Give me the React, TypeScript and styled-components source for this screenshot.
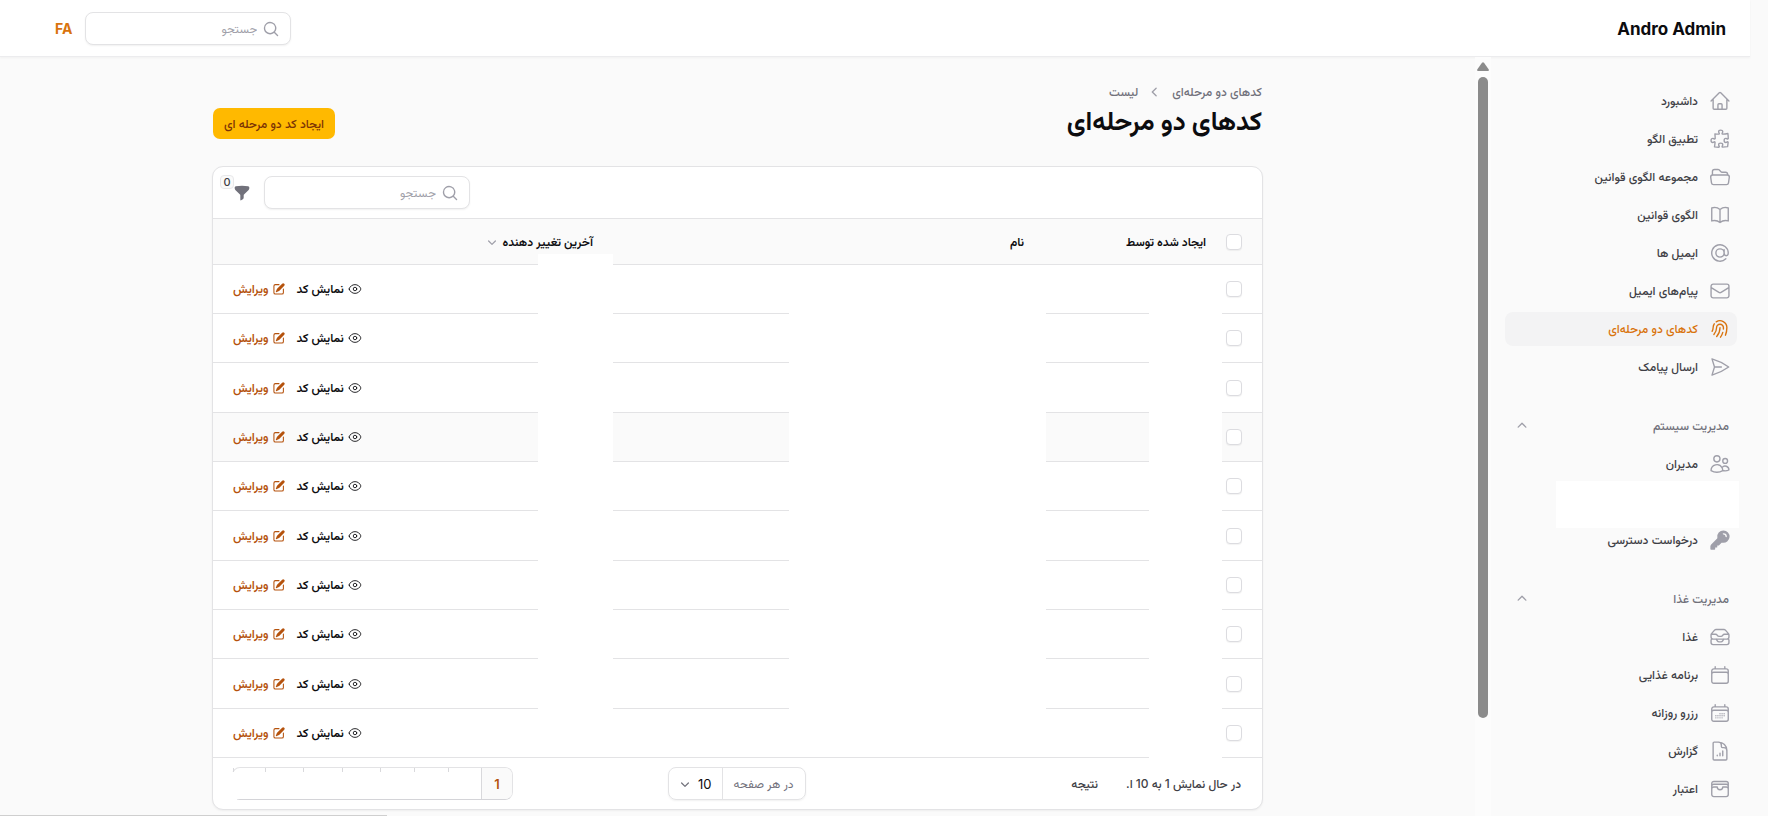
import React from "react";
import styled, { createGlobalStyle, css } from "styled-components";
import type { IconType } from "react-icons";
import {
  HiFunnel,
  HiKey,
  HiMiniChevronDown,
  HiMiniChevronLeft,
  HiMiniChevronUp,
  HiMiniMagnifyingGlass,
  HiMiniPencilSquare,
  HiOutlineAtSymbol,
  HiOutlineBookOpen,
  HiOutlineCalendar,
  HiOutlineCalendarDays,
  HiOutlineDocumentChartBar,
  HiOutlineEnvelope,
  HiOutlineEye,
  HiOutlineFingerPrint,
  HiOutlineFolderOpen,
  HiOutlineHome,
  HiOutlineInboxStack,
  HiOutlinePaperAirplane,
  HiOutlinePuzzlePiece,
  HiOutlineUsers,
  HiOutlineWallet,
} from "react-icons/hi2";

const color = {
  page: "#fafafa",
  surface: "#ffffff",
  line: "#e3e3e5",
  hover: "#f3f3f4",
  text: "#0c0c0f",
  body: "#3f3f46",
  muted: "#71717b",
  icon: "#9f9fa9",
  accent: "#d9730d",
  accentDark: "#b5520c",
  amber: "#ffb900",
  brown: "#7b3306",
  thumb: "#8b8b8b",
};

const GlobalStyle = createGlobalStyle`
  *, *::before, *::after { box-sizing: border-box; }
  body {
    margin: 0;
    background: ${color.page};
    color: ${color.text};
    font-family: Inter, Vazirmatn, "Noto Sans Arabic", "DejaVu Sans", sans-serif;
    font-size: 12px;
    line-height: 20px;
    overflow: hidden;
  }
  button, input, select { font: inherit; color: inherit; }
  a { color: inherit; text-decoration: none; }
  svg { flex: none; }
`;

const Page = styled.div`
  height: 100vh;
  padding-right: 18px;
  display: flex;
  flex-direction: column;
`;

const TopBar = styled.header`
  flex: none;
  height: 57px;
  padding: 1px 24px 0 55px;
  display: flex;
  align-items: center;
  justify-content: space-between;
  background: ${color.surface};
  border-bottom: 1px solid #ececee;
  box-shadow: 0 1px 2px rgba(0, 0, 0, 0.04);
`;

const Brand = styled.a`
  font-size: 17px;
  font-weight: 700;
  line-height: 28px;
`;

const TopTools = styled.div`
  display: flex;
  align-items: center;
  gap: 13px;
`;

const LocaleButton = styled.button`
  padding: 0;
  border: 0;
  background: none;
  color: ${color.accent};
  font-size: 14px;
  font-weight: 700;
  cursor: pointer;
`;

const SearchBox = styled.label`
  width: 206px;
  height: 33px;
  padding: 0 10px;
  display: flex;
  align-items: center;
  gap: 5px;
  background: ${color.surface};
  border: 1px solid ${color.line};
  border-radius: 8px;
  box-shadow: 0 1px 2px rgba(0, 0, 0, 0.06);
  color: ${color.icon};
`;

const SearchInput = styled.input`
  flex: 1;
  min-width: 0;
  padding: 0;
  border: 0;
  outline: 0;
  background: none;
  color: ${color.text};
  &::placeholder {
    color: ${color.icon};
    opacity: 1;
  }
`;

const Body = styled.div`
  flex: 1;
  min-height: 0;
  display: flex;
`;

const Sidebar = styled.nav`
  flex: none;
  width: 259px;
  padding: 27px 13px 0 14px;
  display: flex;
  flex-direction: column;
  gap: 25px;
  overflow: hidden;
`;

const NavGroup = styled.section`
  flex: none;
  display: flex;
  flex-direction: column;
  gap: 4px;
`;

const NavHeading = styled.button`
  height: 34px;
  padding: 0 8px;
  display: flex;
  align-items: center;
  justify-content: space-between;
  border: 0;
  background: none;
  color: ${color.muted};
  font-weight: 500;
  cursor: pointer;
  svg { color: ${color.icon}; }
`;

const NavList = styled.ul`
  margin: 0;
  padding: 0;
  list-style: none;
  display: flex;
  flex-direction: column;
  gap: 4px;
`;

const NavLink = styled.a<{ $active?: boolean }>`
  height: 34px;
  padding: 0 6px;
  display: flex;
  align-items: center;
  gap: 11px;
  border-radius: 8px;
  color: ${color.body};
  font-weight: 500;
  svg { color: ${color.icon}; }
  ${(p) =>
    p.$active &&
    css`
      background: ${color.hover};
      color: ${color.accent};
      svg { color: ${color.accent}; }
    `}
`;

const NavBlank = styled.li`
  height: 47px;
  width: 183px;
  margin: -4px -2px -9px 0;
  background: ${color.surface};
`;

const ScrollTrack = styled.div`
  flex: none;
  width: 16px;
  padding-top: 5px;
  display: flex;
  flex-direction: column;
  align-items: center;
  gap: 6px;
  background: #fcfcfc;
`;

const ScrollArrow = styled.svg`
  display: block;
  fill: ${color.thumb};
`;

const ScrollThumb = styled.div`
  width: 10px;
  height: 85%;
  border-radius: 5px;
  background: ${color.thumb};
`;

const Main = styled.main`
  flex: 1;
  min-width: 0;
  padding: 25px 32px 0;
`;

const Content = styled.div`
  max-width: 1051px;
  margin: 0 auto;
`;

const PageHead = styled.div`
  display: flex;
  align-items: center;
  justify-content: space-between;
  margin-bottom: 27px;
  padding: 0 1px;
`;

const Crumbs = styled.ol`
  margin: 0;
  padding: 0;
  list-style: none;
  display: flex;
  align-items: center;
  gap: 8px;
  color: ${color.muted};
  font-weight: 500;
`;

const Crumb = styled.li`
  display: flex;
  align-items: center;
  gap: 8px;
  svg { color: ${color.icon}; }
`;

const Title = styled.h1`
  margin: 1px 0 0;
  font-size: 26px;
  line-height: 36px;
  font-weight: 700;
`;

const CreateButton = styled.button`
  height: 31px;
  padding: 0 11px;
  margin-top: 26px;
  align-self: flex-start;
  border: 0;
  border-radius: 7px;
  background: ${color.amber};
  color: ${color.brown};
  font-weight: 500;
  cursor: pointer;
`;

const Card = styled.section`
  position: relative;
  background: ${color.surface};
  border: 1px solid ${color.line};
  border-radius: 11px;
  box-shadow: 0 1px 2px rgba(0, 0, 0, 0.05);
`;

const Toolbar = styled.div`
  height: 51px;
  padding: 0 20px;
  display: flex;
  align-items: center;
  justify-content: flex-end;
  gap: 13px;
`;

const FilterButton = styled.button`
  position: relative;
  width: 18px;
  height: 20px;
  padding: 0;
  display: grid;
  place-items: center;
  border: 0;
  background: none;
  color: ${color.muted};
  cursor: pointer;
`;

const Badge = styled.span`
  position: absolute;
  right: 17px;
  bottom: 14px;
  width: 14px;
  height: 14px;
  border: 1px solid #e8e8ea;
  border-radius: 4px;
  background: ${color.page};
  color: ${color.body};
  font-size: 11px;
  line-height: 12px;
  font-weight: 500;
  text-align: center;
`;

const TableWrap = styled.div`
  position: relative;
`;

const Table = styled.table`
  width: 100%;
  border-collapse: separate;
  border-spacing: 0;
  table-layout: fixed;
`;

const HeadCell = styled.th<{ $width?: string }>`
  width: ${(p) => p.$width ?? "auto"};
  height: 47px;
  padding: 0 11px;
  background: ${color.page};
  border-top: 1px solid ${color.line};
  border-bottom: 1px solid ${color.line};
  text-align: right;
  font-weight: 600;
`;

const SortButton = styled.button`
  padding: 0;
  display: flex;
  align-items: center;
  gap: 3px;
  border: 0;
  background: none;
  font-weight: 600;
  cursor: pointer;
  svg { color: ${color.icon}; }
`;

const Cell = styled.td`
  height: 49px;
  padding: 0 20px;
  border-bottom: 1px solid ${color.line};
`;

const Row = styled.tr<{ $hovered?: boolean }>`
  background: ${(p) => (p.$hovered ? color.page : color.surface)};
  &:nth-child(3n) ${Cell} {
    height: 50px;
  }
`;

const CheckBox = styled.input`
  appearance: none;
  display: block;
  width: 16px;
  height: 16px;
  margin: 0;
  border: 1px solid #dcdce0;
  border-radius: 4px;
  background: ${color.surface};
  box-shadow: 0 1px 1px rgba(0, 0, 0, 0.05);
`;

const CheckHeadCell = styled(HeadCell)`
  padding: 0 20px;
`;

const Actions = styled.div`
  display: flex;
  justify-content: flex-end;
  gap: 10px;
`;

const Action = styled.button<{ $accent?: boolean }>`
  padding: 0;
  display: flex;
  align-items: center;
  gap: 4px;
  border: 0;
  background: none;
  color: ${(p) => (p.$accent ? color.accentDark : color.text)};
  font-weight: 600;
  cursor: pointer;
`;

const Redaction = styled.div<{ $right: number; $width: number; $top: number; $bottom: number }>`
  position: absolute;
  right: ${(p) => p.$right}px;
  width: ${(p) => p.$width}px;
  top: ${(p) => p.$top}px;
  bottom: ${(p) => p.$bottom}px;
  background: ${color.surface};
`;

const Footer = styled.footer`
  height: 51px;
  padding: 0 21px 0 19px;
  display: grid;
  grid-template-columns: 1fr auto 1fr;
  align-items: center;
`;

const Summary = styled.p`
  margin: 0;
  display: flex;
  gap: 28px;
  color: ${color.body};
  font-weight: 500;
`;

const PerPage = styled.label`
  position: relative;
  height: 33px;
  display: flex;
  align-items: center;
  border: 1px solid ${color.line};
  border-radius: 8px;
  box-shadow: 0 1px 2px rgba(0, 0, 0, 0.06);
  color: ${color.muted};
  svg {
    position: absolute;
    left: 8px;
    pointer-events: none;
  }
`;

const PerPageText = styled.span`
  padding: 0 11px;
`;

const PerPageSelect = styled.select`
  appearance: none;
  height: 100%;
  width: 54px;
  padding: 0 10px 0 0;
  border: 0;
  border-right: 1px solid ${color.line};
  outline: 0;
  background: none;
  color: ${color.text};
  font-size: 13px;
`;

const Pager = styled.ol`
  position: relative;
  justify-self: end;
  height: 33px;
  margin: 0;
  padding: 0;
  list-style: none;
  display: flex;
  border: 1px solid ${color.line};
  border-bottom-color: #d4d4d8;
  border-radius: 8px;
`;

const PagerItem = styled.li<{ $width: number }>`
  width: ${(p) => p.$width}px;
  border-left: 1px solid #d9d9dc;
`;

const PagerButton = styled.button`
  width: 100%;
  height: 100%;
  padding: 0;
  border: 0;
  border-radius: 0 7px 7px 0;
  background: ${color.page};
  color: ${color.accentDark};
  font-size: 13px;
  font-weight: 600;
`;

const PagerCover = styled.div`
  position: absolute;
  left: -2px;
  right: 31px;
  top: 4px;
  bottom: 0;
  background: ${color.surface};
  &::after {
    content: "";
    position: absolute;
    left: 0;
    top: 100%;
    width: 6px;
    height: 2px;
    background: ${color.surface};
  }
`;

const StatusEdge = styled.div`
  position: fixed;
  left: 0;
  bottom: 0;
  width: 387px;
  height: 1px;
  background: #cfcfcf;
`;

type NavItem = { label: string; icon: IconType; active?: boolean } | null;

const navGroups: { heading?: string; items: NavItem[] }[] = [
  {
    items: [
      { label: "داشبورد", icon: HiOutlineHome },
      { label: "تطبیق الگو", icon: HiOutlinePuzzlePiece },
      { label: "مجموعه الگوی قوانین", icon: HiOutlineFolderOpen },
      { label: "الگوی قوانین", icon: HiOutlineBookOpen },
      { label: "ایمیل ها", icon: HiOutlineAtSymbol },
      { label: "پیام‌های ایمیل", icon: HiOutlineEnvelope },
      { label: "کدهای دو مرحله‌ای", icon: HiOutlineFingerPrint, active: true },
      { label: "ارسال پیامک", icon: HiOutlinePaperAirplane },
    ],
  },
  {
    heading: "مدیریت سیستم",
    items: [
      { label: "مدیران", icon: HiOutlineUsers },
      null,
      { label: "درخواست دسترسی", icon: HiKey },
    ],
  },
  {
    heading: "مدیریت غذا",
    items: [
      { label: "غذا", icon: HiOutlineInboxStack },
      { label: "برنامه غذایی", icon: HiOutlineCalendar },
      { label: "رزرو روزانه", icon: HiOutlineCalendarDays },
      { label: "گزارش", icon: HiOutlineDocumentChartBar },
      { label: "اعتبار", icon: HiOutlineWallet },
    ],
  },
];

const rows = Array.from({ length: 10 }, (_, i) => i);
const hoveredRow = 3;
const pagerWidths = [33, 34, 34, 38, 39, 38, 32];

function Search() {
  return (
    <SearchBox>
      <HiMiniMagnifyingGlass size={18} />
      <SearchInput type="search" placeholder="جستجو" aria-label="جستجو" />
    </SearchBox>
  );
}

function SideNav() {
  return (
    <Sidebar>
      {navGroups.map((group, g) => (
        <NavGroup key={g}>
          {group.heading && (
            <NavHeading type="button">
              {group.heading}
              <HiMiniChevronUp size={18} />
            </NavHeading>
          )}
          <NavList>
            {group.items.map((item, i) =>
              item ? (
                <li key={i}>
                  <NavLink href="#" $active={item.active}>
                    <item.icon size={22} />
                    {item.label}
                  </NavLink>
                </li>
              ) : (
                <NavBlank key={i} />
              )
            )}
          </NavList>
        </NavGroup>
      ))}
    </Sidebar>
  );
}

function CodesTable() {
  return (
    <TableWrap>
      <Table>
        <thead>
          <tr>
            <CheckHeadCell $width="45px">
              <CheckBox type="checkbox" aria-label="انتخاب همه" />
            </CheckHeadCell>
            <HeadCell $width="182px">ایجاد شده توسط</HeadCell>
            <HeadCell $width="431px">نام</HeadCell>
            <HeadCell>
              <SortButton type="button">
                آخرین تغییر دهنده
                <HiMiniChevronDown size={16} />
              </SortButton>
            </HeadCell>
            <HeadCell $width="180px" aria-label="عملیات" />
          </tr>
        </thead>
        <tbody>
          {rows.map((row) => (
            <Row key={row} $hovered={row === hoveredRow}>
              <Cell>
                <CheckBox type="checkbox" aria-label="انتخاب ردیف" />
              </Cell>
              <Cell />
              <Cell />
              <Cell />
              <Cell>
                <Actions>
                  <Action type="button">
                    <HiOutlineEye size={14} />
                    نمایش کد
                  </Action>
                  <Action type="button" $accent>
                    <HiMiniPencilSquare size={14} />
                    ویرایش
                  </Action>
                </Actions>
              </Cell>
            </Row>
          ))}
        </tbody>
      </Table>
      <Redaction $right={649} $width={75} $top={36} $bottom={1} />
      <Redaction $right={216} $width={257} $top={48} $bottom={1} />
      <Redaction $right={40} $width={73} $top={48} $bottom={0} />
    </TableWrap>
  );
}

export default function App() {
  return (
    <Page dir="rtl">
      <GlobalStyle />
      <TopBar>
        <Brand href="#">Andro Admin</Brand>
        <TopTools>
          <Search />
          <LocaleButton type="button">FA</LocaleButton>
        </TopTools>
      </TopBar>
      <Body>
        <SideNav />
        <ScrollTrack>
          <ScrollArrow width="12" height="9" viewBox="0 0 12 9">
            <path d="M5 .8Q6-.4 7 .8L11.600 7.200Q12.400 9 11 9H1Q-.4 9 .4 7.200Z" />
          </ScrollArrow>
          <ScrollThumb />
        </ScrollTrack>
        <Main>
          <Content>
            <PageHead>
              <div>
                <Crumbs>
                  <Crumb>
                    <a href="#">کدهای دو مرحله‌ای</a>
                  </Crumb>
                  <Crumb>
                    <HiMiniChevronLeft size={18} />
                    لیست
                  </Crumb>
                </Crumbs>
                <Title>کدهای دو مرحله‌ای</Title>
              </div>
              <CreateButton type="button">ایجاد کد دو مرحله ای</CreateButton>
            </PageHead>
            <Card>
              <Toolbar>
                <Search />
                <FilterButton type="button" aria-label="فیلتر">
                  <HiFunnel size={18} />
                  <Badge>0</Badge>
                </FilterButton>
              </Toolbar>
              <CodesTable />
              <Footer>
                <Summary>
                  <span>در حال نمایش 1 به 10 ا.</span>
                  <span>نتیجه</span>
                </Summary>
                <PerPage>
                  <PerPageText>در هر صفحه</PerPageText>
                  <PerPageSelect defaultValue="10">
                    <option>10</option>
                    <option>25</option>
                    <option>50</option>
                  </PerPageSelect>
                  <HiMiniChevronDown size={16} />
                </PerPage>
                <Pager>
                  <PagerItem $width={31}>
                    <PagerButton type="button">1</PagerButton>
                  </PagerItem>
                  {pagerWidths.map((width, i) => (
                    <PagerItem key={i} $width={width} />
                  ))}
                  <PagerCover />
                </Pager>
              </Footer>
            </Card>
          </Content>
        </Main>
      </Body>
      <StatusEdge />
    </Page>
  );
}
